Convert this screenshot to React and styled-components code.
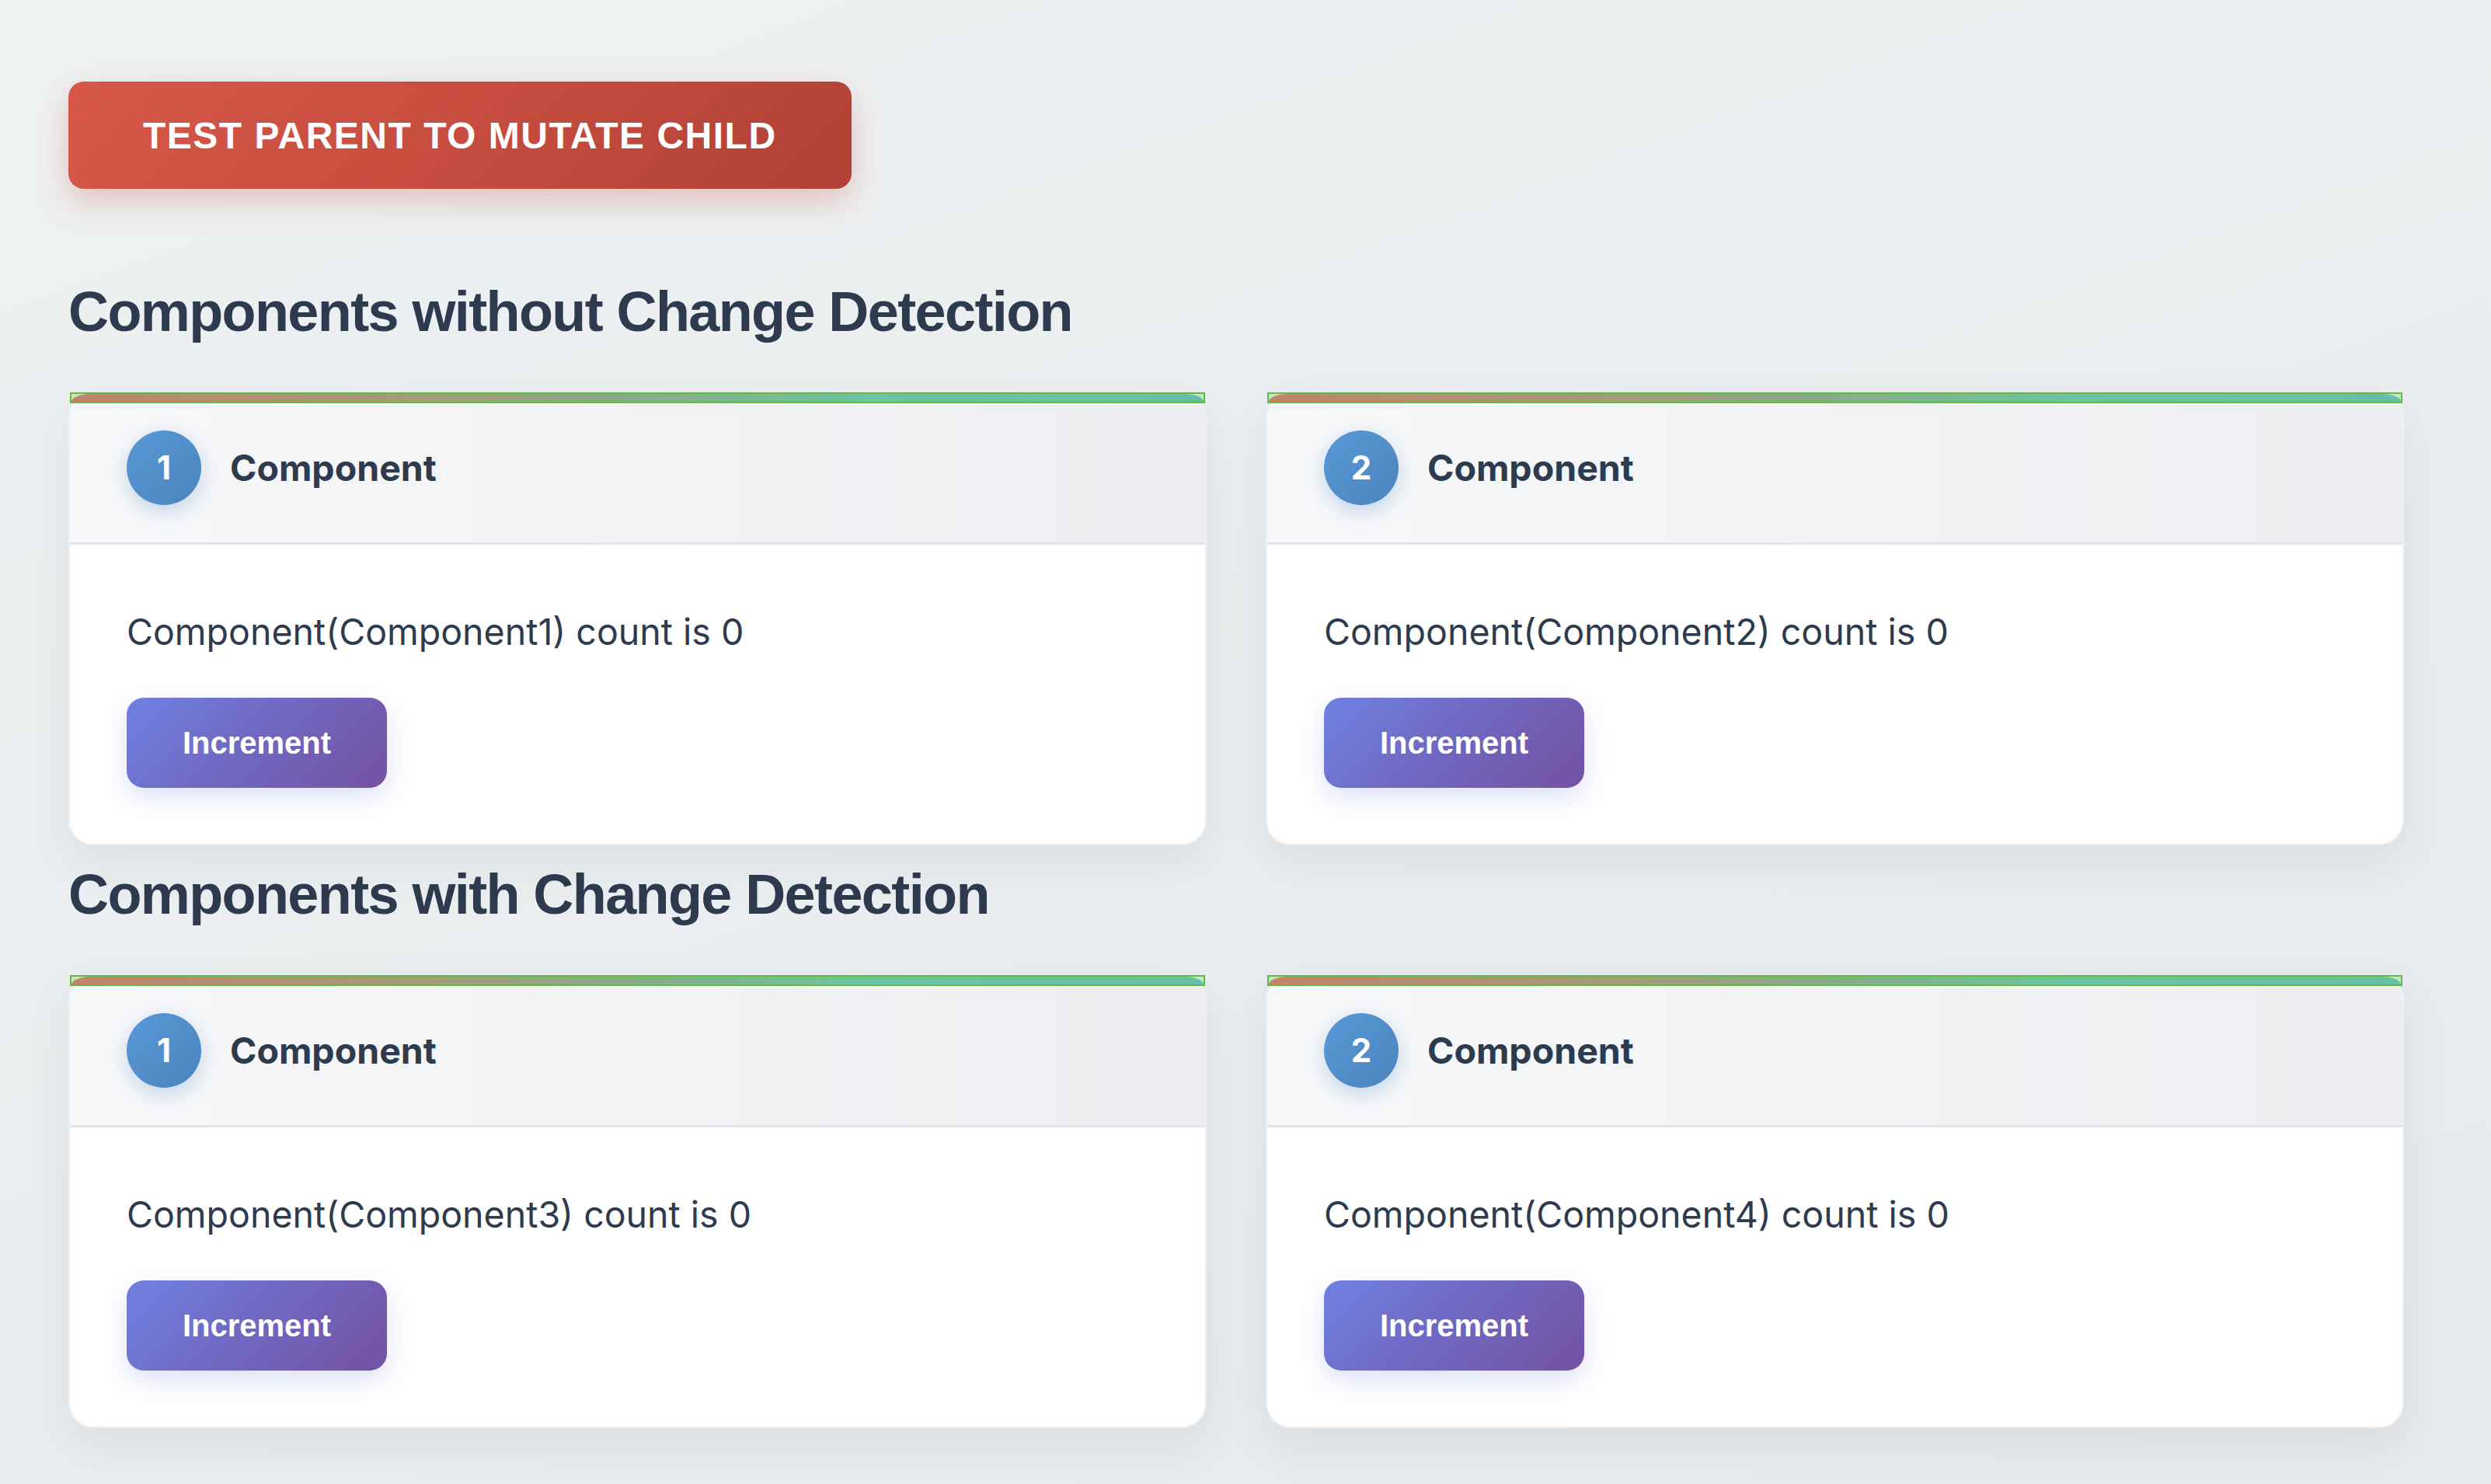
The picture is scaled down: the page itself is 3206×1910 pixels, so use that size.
import React from "react";
import styled, { createGlobalStyle } from "styled-components";

const GlobalStyle = createGlobalStyle`
  html, body {
    margin: 0;
    padding: 0;
  }
  body {
    min-height: 1910px;
    background: linear-gradient(160deg, #eef1f2 0%, #eaedef 60%, #e7eaec 100%);
    font-family: Inter, "Noto Sans", sans-serif;
    color: #2e3b4e;
  }
`;

const Page = styled.div`
  padding: 105px 112px 60px 88px;
`;

const MutateButton = styled.button`
  display: inline-flex;
  align-items: center;
  height: 138px;
  padding: 0 96px;
  border: 0;
  border-radius: 20px;
  background: linear-gradient(135deg, #d75849 0%, #c64d3f 50%, #b04035 100%);
  box-shadow: 0 16px 40px rgba(196, 74, 60, 0.28);
  color: #fff;
  font-family: "Liberation Sans", Arial, sans-serif;
  font-weight: 700;
  font-size: 48px;
  letter-spacing: 1.5px;
  text-transform: uppercase;
  cursor: pointer;
`;

const SectionTitle = styled.h2`
  margin: ${({ $first }) => ($first ? "122px" : "27px")} 0 68px;
  font-family: "Liberation Sans", Arial, sans-serif;
  font-weight: 700;
  font-size: 72px;
  line-height: 72px;
  letter-spacing: -1.6px;
  color: #2e3b4e;
`;

const Grid = styled.div`
  display: grid;
  grid-template-columns: 1fr 1fr;
  gap: 76px;
`;

const CardWrap = styled.div`
  position: relative;
`;

const Card = styled.div`
  border: 2px solid #eef0f2;
  border-radius: 32px;
  overflow: hidden;
  background: #fff;
  box-shadow: 0 22px 60px rgba(40, 50, 60, 0.08);
`;

// change-detection highlight lying over the card's top strip
const Highlight = styled.div`
  position: absolute;
  top: 0;
  left: 2px;
  right: 2px;
  height: 14px;
  box-sizing: border-box;
  border: 2px solid #5cbf3b;
  background: #c9e5c3;
  z-index: 1;
`;

const Strip = styled.div`
  height: 100%;
  border-radius: 30px 30px 0 0 / 12px 12px 0 0;
  background: linear-gradient(90deg, #c4836a 0%, #a69a78 30%, #86ad88 50%, #6dc49f 70%, #66bea8 100%);
`;

const CardHeader = styled.div`
  display: flex;
  align-items: center;
  gap: 37px;
  box-sizing: border-box;
  height: 180px;
  margin-top: 14px;
  padding: 0 73px 16px;
  background: linear-gradient(90deg, #f7f8fa 0%, #f0f2f4 55%, #eceef1 100%);
  border-bottom: 3px solid #e1e4e9;
`;

const Badge = styled.div`
  display: flex;
  align-items: center;
  justify-content: center;
  width: 96px;
  height: 96px;
  border-radius: 50%;
  background: linear-gradient(135deg, #5999d7 0%, #4a84bd 100%);
  box-shadow: 0 8px 26px rgba(74, 132, 200, 0.3);
  color: #fff;
  font-weight: 700;
  font-size: 42px;
`;

const CardTitle = styled.h3`
  margin: 0;
  font-size: 46.5px;
  font-weight: 700;
  color: #2e3b4e;
`;

const CardBody = styled.div`
  padding: 84px 73px 72px;
`;

const CountText = styled.p`
  margin: 0 0 57px;
  font-size: 46.5px;
  font-weight: 400;
  color: #2e3b4e;
`;

const IncrementButton = styled.button`
  width: 335px;
  height: 116px;
  border: 0;
  border-radius: 22px;
  background: linear-gradient(135deg, #6f81e2 0%, #7067c0 50%, #7451a2 100%);
  box-shadow: 0 12px 32px rgba(102, 118, 234, 0.22);
  color: #fff;
  font-family: "Liberation Sans", Arial, sans-serif;
  font-weight: 700;
  font-size: 40px;
  cursor: pointer;
`;

function CounterCard({ index, name }) {
  return (
    <CardWrap>
      <Highlight>
        <Strip />
      </Highlight>
      <Card>
        <CardHeader>
          <Badge>{index}</Badge>
          <CardTitle>Component</CardTitle>
        </CardHeader>
        <CardBody>
          <CountText>Component({name}) count is 0</CountText>
          <IncrementButton>Increment</IncrementButton>
        </CardBody>
      </Card>
    </CardWrap>
  );
}

export default function App() {
  return (
    <>
      <GlobalStyle />
      <Page>
        <MutateButton>Test parent to mutate child</MutateButton>

        <SectionTitle $first>Components without Change Detection</SectionTitle>
        <Grid>
          <CounterCard index={1} name="Component1" />
          <CounterCard index={2} name="Component2" />
        </Grid>

        <SectionTitle>Components with Change Detection</SectionTitle>
        <Grid>
          <CounterCard index={1} name="Component3" />
          <CounterCard index={2} name="Component4" />
        </Grid>
      </Page>
    </>
  );
}
